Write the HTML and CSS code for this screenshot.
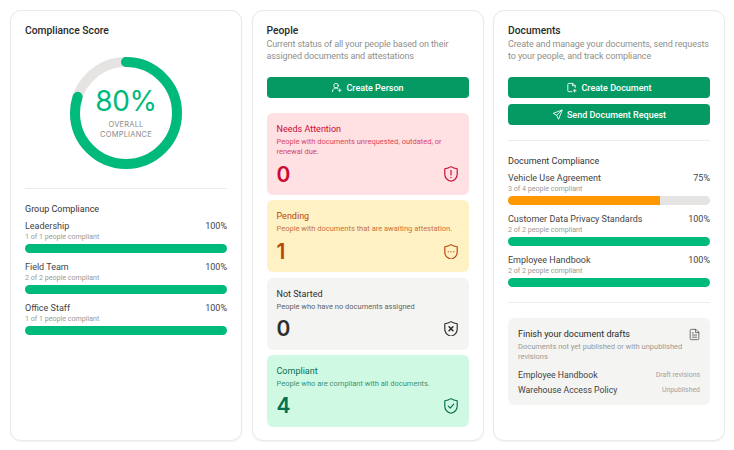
FILE: index.html
```html
<!DOCTYPE html>
<html lang="en">
<head>
    <meta charset="UTF-8">
    <meta name="viewport" content="width=device-width, initial-scale=1.0">
    <title>Compliance Overview</title>
    <link rel="stylesheet" href="styles.css">
</head>
<body>
<div class="dashboard">

    <section class="card">
        <h2 class="card-title">Compliance Score</h2>
        <div class="ring">
            <svg class="ring-svg" width="112" height="112" viewBox="0 0 112 112">
                <circle cx="56" cy="56" r="51" fill="none" stroke="#e5e4e2" stroke-width="10"/>
                <circle cx="56" cy="56" r="51" fill="none" stroke="#00ba7c" stroke-width="10" stroke-linecap="round" stroke-dasharray="256.4 320.4" transform="rotate(-90 56 56)"/>
            </svg>
            <div class="ring-label">
                <div class="ring-value">80%</div>
                <div class="ring-caption">OVERALL<br>COMPLIANCE</div>
            </div>
        </div>
        <hr class="divider divider-score">
        <h3 class="section-title">Group Compliance</h3>
        <div class="progress-list">
            <div class="progress-item">
                <div class="progress-head"><span>Leadership</span><span>100%</span></div>
                <div class="progress-sub">1 of 1 people compliant</div>
                <div class="bar"><div class="bar-fill" style="width: 100%"></div></div>
            </div>
            <div class="progress-item">
                <div class="progress-head"><span>Field Team</span><span>100%</span></div>
                <div class="progress-sub">2 of 2 people compliant</div>
                <div class="bar"><div class="bar-fill" style="width: 100%"></div></div>
            </div>
            <div class="progress-item">
                <div class="progress-head"><span>Office Staff</span><span>100%</span></div>
                <div class="progress-sub">1 of 1 people compliant</div>
                <div class="bar"><div class="bar-fill" style="width: 100%"></div></div>
            </div>
        </div>
    </section>

    <section class="card">
        <h2 class="card-title">People</h2>
        <p class="card-desc">Current status of all your people based on their assigned documents and attestations</p>
        <div class="buttons">
            <button class="btn">
                <svg class="icon" viewBox="0 0 24 24"><circle cx="11" cy="8" r="5"/><path d="M3 21a8 8 0 0 1 12-7"/><path d="M19 15v6M16 18h6"/></svg>
                Create Person
            </button>
        </div>
        <div class="status-list">
            <div class="status status-red">
                <div class="status-name">Needs Attention</div>
                <div class="status-desc">People with documents unrequested, outdated, or renewal due.</div>
                <div class="status-foot">
                    <span class="status-count">0</span>
                    <svg class="shield" viewBox="3 2 18 20"><path d="M12 2.800c2.400 1.600 5 2.400 8 2.700v7c0 4.800-3.400 7.700-8 9.200-4.600-1.500-8-4.400-8-9.200v-7c3-.3 5.600-1.100 8-2.700z"/><path d="M12 7.500v6M12 16.500v.5"/></svg>
                </div>
            </div>
            <div class="status status-yellow">
                <div class="status-name">Pending</div>
                <div class="status-desc">People with documents that are awaiting attestation.</div>
                <div class="status-foot">
                    <span class="status-count">1</span>
                    <svg class="shield" viewBox="3 2 18 20"><path d="M12 2.800c2.400 1.600 5 2.400 8 2.700v7c0 4.800-3.400 7.700-8 9.200-4.600-1.500-8-4.400-8-9.200v-7c3-.3 5.600-1.100 8-2.700z"/><path d="M8.300 12h.4M11.800 12h.4M15.300 12h.4"/></svg>
                </div>
            </div>
            <div class="status status-gray">
                <div class="status-name">Not Started</div>
                <div class="status-desc">People who have no documents assigned</div>
                <div class="status-foot">
                    <span class="status-count">0</span>
                    <svg class="shield" viewBox="3 2 18 20"><path d="M12 2.800c2.400 1.600 5 2.400 8 2.700v7c0 4.800-3.400 7.700-8 9.200-4.600-1.500-8-4.400-8-9.200v-7c3-.3 5.600-1.100 8-2.700z"/><path class="shield-mark" d="M9.500 9.500l5 5M14.500 9.500l-5 5"/></svg>
                </div>
            </div>
            <div class="status status-green">
                <div class="status-name">Compliant</div>
                <div class="status-desc">People who are compliant with all documents.</div>
                <div class="status-foot">
                    <span class="status-count">4</span>
                    <svg class="shield" viewBox="3 2 18 20"><path d="M12 2.800c2.400 1.600 5 2.400 8 2.700v7c0 4.800-3.400 7.700-8 9.200-4.600-1.500-8-4.400-8-9.200v-7c3-.3 5.600-1.100 8-2.700z"/><path d="M8.500 12.500l2.500 2.500 4.500-5"/></svg>
                </div>
            </div>
        </div>
    </section>

    <section class="card">
        <h2 class="card-title">Documents</h2>
        <p class="card-desc">Create and manage your documents, send requests to your people, and track compliance</p>
        <div class="buttons">
            <button class="btn">
                <svg class="icon" viewBox="0 0 24 24"><path d="M13 21H6a2 2 0 0 1-2-2V5a2 2 0 0 1 2-2h9l5 5v4"/><path d="M14 3v5h6"/><path d="M19 16v6M16 19h6"/></svg>
                Create Document
            </button>
            <button class="btn">
                <svg class="icon" viewBox="0 0 24 24"><path d="M21.500 2.500L2.500 9.500l7.500 4 4 8z"/><path d="M21.500 2.500L10 14"/></svg>
                Send Document Request
            </button>
        </div>
        <hr class="divider divider-docs">
        <h3 class="section-title">Document Compliance</h3>
        <div class="progress-list">
            <div class="progress-item">
                <div class="progress-head"><span>Vehicle Use Agreement</span><span>75%</span></div>
                <div class="progress-sub">3 of 4 people compliant</div>
                <div class="bar"><div class="bar-fill bar-orange" style="width: 75%"></div></div>
            </div>
            <div class="progress-item">
                <div class="progress-head"><span>Customer Data Privacy Standards</span><span>100%</span></div>
                <div class="progress-sub">2 of 2 people compliant</div>
                <div class="bar"><div class="bar-fill" style="width: 100%"></div></div>
            </div>
            <div class="progress-item">
                <div class="progress-head"><span>Employee Handbook</span><span>100%</span></div>
                <div class="progress-sub">2 of 2 people compliant</div>
                <div class="bar"><div class="bar-fill" style="width: 100%"></div></div>
            </div>
        </div>
        <hr class="divider divider-drafts">
        <div class="drafts">
            <div class="drafts-head">
                <span class="drafts-title">Finish your document drafts</span>
                <svg class="drafts-icon" viewBox="0 0 24 24"><path d="M14 2.500H6a2 2 0 0 0-2 2v15a2 2 0 0 0 2 2h12a2 2 0 0 0 2-2V8.500z"/><path d="M14 2.500v6h6"/><path d="M8 13h8M8 17h8M8 9h2"/></svg>
            </div>
            <p class="drafts-desc">Documents not yet published or with unpublished revisions</p>
            <div class="draft-row"><span>Employee Handbook</span><span class="draft-state">Draft revisions</span></div>
            <div class="draft-row"><span>Warehouse Access Policy</span><span class="draft-state">Unpublished</span></div>
        </div>
    </section>

</div>
</body>
</html>
```

FILE: styles.css
```css
* {
    box-sizing: border-box;
}

body {
    margin: 0;
    background-color: #fff;
    font-family: Roboto, "Liberation Sans", sans-serif;
    color: #333;
}

.dashboard {
    display: grid;
    grid-template-columns: 232px 232px 232px;
    gap: 9.500px;
    width: 734px;
    height: 450px;
    padding: 10px 0 9px 10px;
}

.card {
    background: #fff;
    border: 1px solid #e9e9e7;
    border-radius: 11px;
    box-shadow: 0 1px 2px rgba(0, 0, 0, 0.05);
    padding: 13px 14px;
}

.card-title {
    margin: 0;
    font-size: 10.300px;
    line-height: 13px;
    font-weight: 500;
    color: #2a2a2a;
}

.card-desc {
    margin: 1px 0 0;
    font-size: 9px;
    line-height: 12px;
    letter-spacing: -0.100px;
    color: #8f8f8c;
}

/* score ring */
.ring {
    display: grid;
    justify-content: center;
    margin-top: 20px;
}

.ring-svg, .ring-label {
    grid-area: 1 / 1;
}

.ring-label {
    text-align: center;
    align-self: center;
}

.ring-value {
    font-family: Inter, sans-serif;
    font-size: 28px;
    line-height: 32px;
    letter-spacing: -0.300px;
    color: #00ba7c;
    margin-top: -1px;
}

.ring-caption {
    font-family: Inter, sans-serif;
    font-size: 7.500px;
    line-height: 10px;
    letter-spacing: 0.200px;
    color: #8c8c89;
    margin-top: 2.500px;
}

.divider {
    border: none;
    border-top: 1px solid #ececea;
    margin: 0;
}

.divider-score {
    margin-top: 19px;
}

.divider-docs {
    margin-top: 15px;
}

.divider-drafts {
    margin-top: 15px;
}

.section-title {
    margin: 14px 0 0;
    font-size: 9px;
    line-height: 12px;
    font-weight: 400;
    color: #333;
}

/* progress rows */
.progress-list {
    display: flex;
    flex-direction: column;
    gap: 8px;
    margin-top: 5px;
}

.progress-head {
    display: flex;
    justify-content: space-between;
    font-size: 9px;
    line-height: 12px;
    color: #444;
}

.progress-sub {
    font-size: 7.100px;
    line-height: 10px;
    color: #9a9a97;
}

.bar {
    height: 9px;
    margin-top: 2px;
    background-color: #e5e4e2;
    border-radius: 5px;
    overflow: hidden;
}

.bar-fill {
    height: 100%;
    background-color: #00ba7c;
}

.bar-orange {
    background-color: #ff9800;
}

/* buttons */
.buttons {
    display: flex;
    flex-direction: column;
    gap: 6px;
    margin-top: 15px;
}

.btn {
    display: flex;
    align-items: center;
    justify-content: center;
    gap: 4px;
    height: 21px;
    padding: 0;
    background-color: #059a64;
    color: #fff;
    border: none;
    border-radius: 4px;
    font-family: inherit;
    font-size: 9px;
    font-weight: 500;
}

.icon {
    width: 11px;
    height: 11px;
    fill: none;
    stroke: #fff;
    stroke-width: 1.900;
    stroke-linecap: round;
    stroke-linejoin: round;
}

/* status blocks */
.status-list {
    display: flex;
    flex-direction: column;
    gap: 5.300px;
    margin-top: 15px;
}

.status {
    border-radius: 6px;
    padding: 10px 10px 8.500px;
}

.status-name {
    font-size: 9px;
    line-height: 12px;
}

.status-desc {
    margin-top: 2px;
    font-size: 7.500px;
    line-height: 10px;
    opacity: 0.75;
}

.status-foot {
    display: flex;
    align-items: center;
    justify-content: space-between;
    margin-top: 4.500px;
}

.status-count {
    font-family: Inter, sans-serif;
    font-size: 21px;
    line-height: 25px;
    font-weight: 600;
}

.shield {
    width: 14px;
    height: 15.500px;
    margin-right: 1px;
    fill: none;
    stroke: currentColor;
    stroke-width: 1.500;
    stroke-linecap: round;
    stroke-linejoin: round;
}

.shield-mark {
    stroke-width: 2;
}

.status-red {
    background-color: #ffe0e3;
    color: #cc0a2f;
}

.status-yellow {
    background-color: #fef1c3;
    color: #b9460b;
}

.status-gray {
    background-color: #f4f4f3;
    color: #2e2e2c;
}

.status-green {
    background-color: #d0f9e4;
    color: #04704f;
}

/* drafts */
.drafts {
    margin-top: 15px;
    padding: 9px 10px 8px;
    background-color: #f4f4f3;
    border-radius: 6px;
}

.drafts-head {
    display: flex;
    align-items: center;
    justify-content: space-between;
    font-size: 9px;
    line-height: 14px;
    font-weight: 400;
    color: #2a2a2a;
}

.drafts-icon {
    width: 13px;
    height: 13px;
    margin-right: -1px;
    fill: none;
    stroke: #555;
    stroke-width: 1.500;
    stroke-linecap: round;
    stroke-linejoin: round;
}

.drafts-desc {
    margin: 1px 0 6px;
    font-size: 7.500px;
    line-height: 10px;
    color: #9a9a97;
}

.draft-row {
    display: flex;
    align-items: center;
    justify-content: space-between;
    font-size: 8.700px;
    line-height: 14.500px;
    color: #444;
}

.draft-state {
    font-size: 6.900px;
    color: #a3a3a0;
}
```
